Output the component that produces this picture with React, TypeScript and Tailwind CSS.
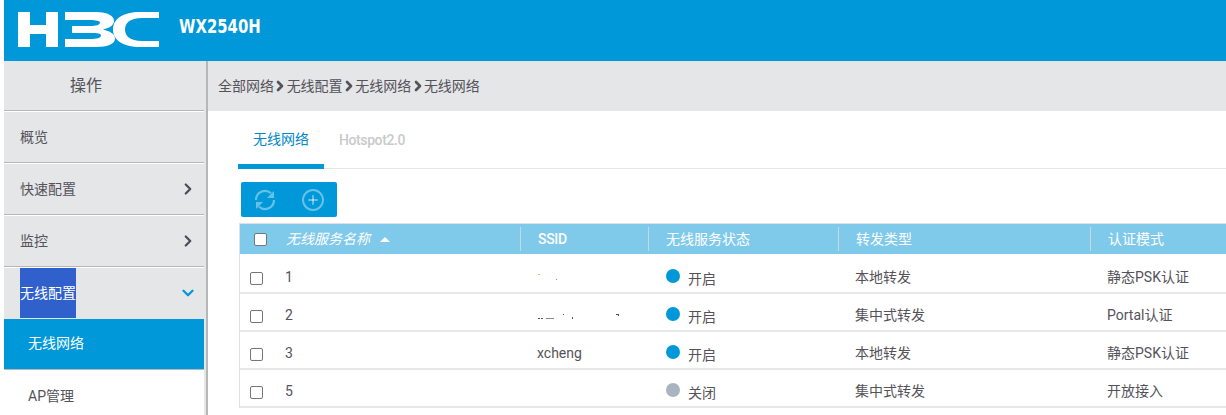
import { CirclePlus, ChevronRight, ChevronDown } from 'lucide-react'

const font = 'font-["Roboto","Noto_Sans_CJK_SC",sans-serif]'

interface Row {
  id: string
  ssid: string
  on: boolean
  forward: string
  auth: string
}

const rows: Row[] = [
  { id: '1', ssid: '', on: true, forward: '本地转发', auth: '静态PSK认证' },
  { id: '2', ssid: '', on: true, forward: '集中式转发', auth: 'Portal认证' },
  { id: '3', ssid: 'xcheng', on: true, forward: '本地转发', auth: '静态PSK认证' },
  { id: '5', ssid: '', on: false, forward: '集中式转发', auth: '开放接入' },
]

function Logo() {
  return (
    <svg width="142" height="36" viewBox="0 0 142 36" className="block" fill="#fff">
      {/* H */}
      <path d="M0 0h12v13h16V0h12v35H28V22H12v13H0z" />
      {/* 3 */}
      <path d="M47 0H78C90 0 96 4 96 9C96 13 92 16 85 17.5C92 19 97 22 97 26.5C97 32 90 35 78 35H47V27H72C79 27 83 26 83 23.5C83 21.500 79 21 74 21H54V14H72C78 14 82 13 82 10.500C82 9 78 8 72 8H47Z" />
      {/* C */}
      <path d="M141 0V6H124C112 6 107 11 107 17.5C107 24 112 29 124 29H141V35H122C105 35 95 28 95 17.5C95 7 105 0 122 0Z" />
    </svg>
  )
}

function RefreshIcon() {
  return (
    <svg width="24" height="24" viewBox="0 0 24 24" fill="none" stroke="currentColor" strokeWidth="2.2">
      <path d="M3 12a9 9 0 0 1 15-6.700" />
      <path d="M21 3v7h-7z" fill="currentColor" stroke="none" />
      <path d="M21 12a9 9 0 0 1-15 6.700" />
      <path d="M3 21v-7h7z" fill="currentColor" stroke="none" />
    </svg>
  )
}

function SideItem({ label, open }: { label: string; open?: boolean }) {
  return (
    <div className="h-[52px] flex items-center justify-between pl-4 pr-[7px] border-b border-[#b5b7b8] shadow-[0_1px_0_#fff] text-sm text-[#55525a]">
      <span className="pt-[1px]">{label}</span>
      {open === false && <ChevronRight size={18} strokeWidth={3} className="text-[#4a4d57]" />}
    </div>
  )
}

function Crumb() {
  return <ChevronRight size={16} strokeWidth={4} className="-mx-[1.7px] text-[#55525a]" />
}

function Checkbox() {
  return <span className="block w-[13px] h-[13px] rounded-[2px] border border-[#767676] bg-white" />
}

// leftovers of the blurred-out ssid values
function Specks({ id }: { id: string }) {
  if (id === '1') {
    return (
      <div className="flex items-end gap-[16px] h-2 -mt-[2px] pl-[1px]">
        <span className="w-[2px] h-[1px] mb-[5px] bg-[#e8b080]" />
        <span className="w-[1px] h-[1px] bg-[#5aa0d8]" />
      </div>
    )
  }
  if (id === '2') {
    return (
      <div className="flex items-end h-2 pl-[1px]">
        <span className="w-[2px] h-[1px] bg-[#55525a]" />
        <span className="w-[2px] h-[1px] ml-[1px] bg-[#55525a]" />
        <span className="w-[8px] h-[1px] ml-[3px] bg-[#8a8890]" />
        <span className="w-[1px] h-[1px] ml-[9px] mb-[4px] bg-[#55525a]" />
        <span className="w-[1px] h-[2px] ml-[8px] bg-[#55525a]" />
        <span className="w-[3px] h-[2px] ml-[43px] mb-[3px] border-t border-r border-[#55525a]" />
      </div>
    )
  }
  return null
}

export default function App() {
  return (
    <div className={`w-[1226px] h-[415px] overflow-hidden bg-white pl-1 flex flex-col ${font}`}>
      {/* Header */}
      <div className="h-[61px] shrink-0 bg-[#0098d8] flex items-center pl-[14px] pb-[1px]">
        <Logo />
        <span className="ml-[19px] mb-[8px] text-white font-bold text-[19px] font-['DejaVu_Sans_Condensed','DejaVu_Sans',sans-serif] scale-x-[0.87] origin-left">WX2540H</span>
      </div>

      <div className="flex-1 flex min-h-0">
        {/* Sidebar */}
        <div className="w-[200px] shrink-0 bg-[#e4e6e8]">
          <div className="h-[50px] flex items-center justify-center pr-[36px] border-b border-[#b5b7b8] shadow-[0_1px_0_#fff] text-base text-[#55525a]">操作</div>
          <SideItem label="概览" />
          <SideItem label="快速配置" open={false} />
          <SideItem label="监控" open={false} />
          <div className="h-[52px] flex items-center justify-between pl-4 pr-[7px] text-sm">
            <span className="h-[50px] mb-[1px] flex items-center bg-[#3060cc] text-white">无线配置</span>
            <ChevronDown size={18} strokeWidth={3} className="text-[#0098d8]" />
          </div>
          <div className="h-[51px] flex items-center pl-6 pb-[2px] bg-[#0098d8] border-b border-[#b5b7b8] text-sm text-white">无线网络</div>
          <div className="h-[50px] flex items-center pl-6 pt-[2px] bg-white text-sm text-[#55525a]">AP管理</div>
        </div>
        <div className="w-[2px] shrink-0 bg-[#e4e6e8]" />
        <div className="w-[2px] shrink-0 bg-[#b5b7b8]" />

        {/* Main */}
        <div className="flex-1 min-w-0 flex flex-col">
          <div className="h-[50px] shrink-0 bg-[#e4e6e8] flex items-center pl-[10px] text-sm text-[#55525a]">
            <span>全部网络</span>
            <Crumb />
            <span>无线配置</span>
            <Crumb />
            <span>无线网络</span>
            <Crumb />
            <span>无线网络</span>
          </div>

          {/* Tabs */}
          <div className="h-[58px] shrink-0 pl-[30px]">
            <div className="h-full flex border-b border-[#e5e5e5]">
              <div className="w-[86px] h-[58px] flex items-center justify-center border-b-[5px] border-[#0098d8] text-sm text-[#0088c8] pt-[2px]">无线网络</div>
              <div className="ml-[15px] h-[57px] flex items-center font-medium text-sm tracking-[-0.4px] text-[#c9cacb]">Hotspot2.0</div>
            </div>
          </div>

          {/* Toolbar */}
          <div className="pl-[33px] pt-[13px]">
            <div className="w-[96px] h-[35px] rounded-[2px] bg-[#0098d8] flex items-center pl-3 gap-6 text-white/40">
              <RefreshIcon />
              <CirclePlus size={24} strokeWidth={2} />
            </div>
          </div>

          {/* Table */}
          <div className="ml-[31px] mt-[6px] border-l border-t border-[#e0e0e0] text-sm">
            <div className="h-[30px] bg-[#7fc9eb] grid grid-cols-[281px_128px_190px_252px_1fr] items-center text-white">
              <div className="h-6 flex items-center pl-[14px] border-r border-[#c8d8e0]">
                <Checkbox />
                <span className="ml-[19px] italic">无线服务名称</span>
                <span className="ml-[10px] w-0 h-0 border-x-[5px] border-x-transparent border-b-[5px] border-b-white" />
              </div>
              <div className="h-6 flex items-center pl-[17px] border-r border-[#c8d8e0] font-medium text-sm tracking-[-0.3px]">SSID</div>
              <div className="h-6 flex items-center pl-[17px] border-r border-[#c8d8e0]">无线服务状态</div>
              <div className="h-6 flex items-center pl-[17px] border-r border-[#c8d8e0]">转发类型</div>
              <div className="h-6 flex items-center pl-[17px]">认证模式</div>
            </div>
            {rows.map((r, i) => (
              <div key={r.id} className={`grid grid-cols-[281px_128px_190px_252px_1fr] items-center border-b-2 border-[#e8e8e8] text-[#55525a] ${i === 0 ? 'h-[40px] pt-[8px]' : 'h-[38px] pt-[6px]'}`}>
                <div className="flex items-center pl-[10px]">
                  <span className="mt-[2px]"><Checkbox /></span>
                  <span className="ml-[22px]">{r.id}</span>
                </div>
                <div className="pl-4">{r.ssid || <Specks id={r.id} />}</div>
                <div className="pl-[17px] flex items-center">
                  <span className={`w-[14px] h-[14px] rounded-full mb-[3px] ${r.on ? 'bg-[#0098d8]' : 'bg-[#a8b5c0]'}`} />
                  <span className="ml-2 mt-[3px]">{r.on ? '开启' : '关闭'}</span>
                </div>
                <div className="pl-4">{r.forward}</div>
                <div className="pl-4">{r.auth}</div>
              </div>
            ))}
          </div>
        </div>
      </div>
    </div>
  )
}
